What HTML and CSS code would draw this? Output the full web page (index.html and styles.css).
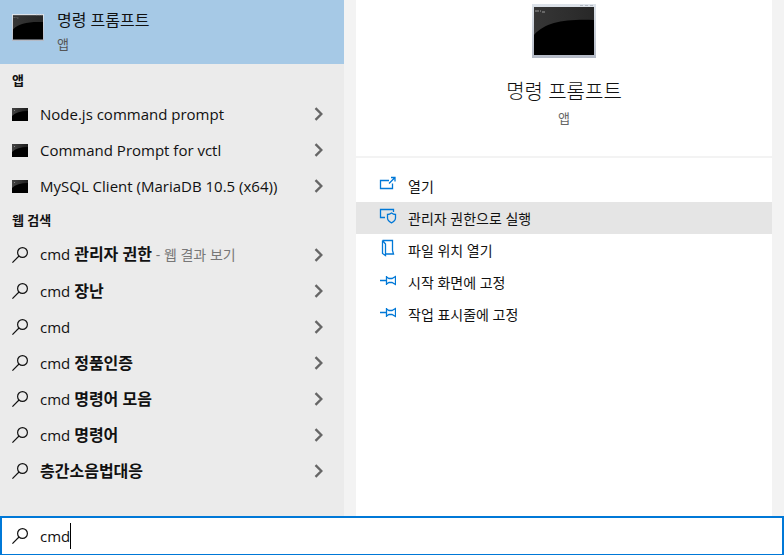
FILE: index.html
```
<!DOCTYPE html>
<html lang="ko">
<head>
    <meta charset="UTF-8">
    <meta name="viewport" content="width=device-width, initial-scale=1.0">
    <title>검색</title>
    <link rel="stylesheet" href="styles.css">
</head>
<body>
    <!-- 공용 아이콘 -->
    <svg class="sprite" aria-hidden="true">
        <defs>
            <linearGradient id="shine" x1="0" y1="0" x2="1" y2="0">
                <stop offset="0" stop-color="#363636"/>
                <stop offset="1" stop-color="#282828"/>
            </linearGradient>
            <linearGradient id="shine-small" x1="0" y1="0" x2="1" y2="0">
                <stop offset="0" stop-color="#444"/>
                <stop offset="1" stop-color="#1c1c1c"/>
            </linearGradient>
            <linearGradient id="frame" x1="0" y1="0" x2="0" y2="1">
                <stop offset="0" stop-color="#dde3ea"/>
                <stop offset="1" stop-color="#b4bac6"/>
            </linearGradient>
        </defs>
        <symbol id="console" viewBox="0 0 64 54">
            <path d="M0 0h64v54H0z" fill="url(#frame)"/>
            <path d="M2 3h60v48H2z" fill="#000"/>
            <path d="M2 3h60v13C32 15 14 18 2 31z" fill="url(#shine)"/>
            <path d="M3 7h2M6 6v2M8 7h1M10 8h3" stroke="#999" fill="none"/>
            <path d="M48 1.500h3M53 1.500h3M58 1.500h3" stroke="#b4bac4" fill="none"/>
        </symbol>
        <symbol id="console-small" viewBox="0 0 16 13">
            <path d="M0 0h16v13H0z" fill="#000"/>
            <path d="M0 0h16v3Q5 3 0 8z" fill="url(#shine-small)"/>
            <path d="M2 2.500h1" stroke="#888"/>
        </symbol>
        <symbol id="search" viewBox="0 0 16 16">
            <circle cx="10.500" cy="5.500" r="4.900" fill="none" stroke="currentColor" stroke-width="1.2"/>
            <path d="M7 9L.4 15.600" stroke="currentColor" stroke-width="1.2"/>
        </symbol>
        <symbol id="chevron" viewBox="0 0 8 12">
            <path d="M1 1l5 5-5 5" fill="none" stroke="#666" stroke-width="2"/>
        </symbol>
        <symbol id="pin" viewBox="0 0 16 16">
            <path d="M0 8.500h6M6.500 4v9M6.500 5l2.500 1.500h3l3.500-2v8l-3.500-2H9L6.500 12" fill="none" stroke="currentColor" stroke-width="1.3"/>
        </symbol>
    </svg>

    <main class="search-window">
        <section class="results">
            <button class="best-match" type="button">
                <svg class="best-icon"><use href="#console"/></svg>
                <span>
                    <span class="best-name">명령 프롬프트</span>
                    <span class="best-type">앱</span>
                </span>
            </button>

            <h2>앱</h2>
            <ul>
                <li><button class="result" type="button"><svg class="row-icon app"><use href="#console-small"/></svg><span>Node.js command prompt</span><svg class="chevron"><use href="#chevron"/></svg></button></li>
                <li><button class="result" type="button"><svg class="row-icon app"><use href="#console-small"/></svg><span>Command Prompt for vctl</span><svg class="chevron"><use href="#chevron"/></svg></button></li>
                <li><button class="result" type="button"><svg class="row-icon app"><use href="#console-small"/></svg><span>MySQL Client (MariaDB 10.5 (x64))</span><svg class="chevron"><use href="#chevron"/></svg></button></li>
            </ul>

            <h2>웹 검색</h2>
            <ul>
                <li><button class="result with-note" type="button"><svg class="row-icon"><use href="#search"/></svg><span>cmd <b>관리자 권한</b> <small>- 웹 결과 보기</small></span><svg class="chevron"><use href="#chevron"/></svg></button></li>
                <li><button class="result" type="button"><svg class="row-icon"><use href="#search"/></svg><span>cmd <b>장난</b></span><svg class="chevron"><use href="#chevron"/></svg></button></li>
                <li><button class="result" type="button"><svg class="row-icon"><use href="#search"/></svg><span>cmd</span><svg class="chevron"><use href="#chevron"/></svg></button></li>
                <li><button class="result" type="button"><svg class="row-icon"><use href="#search"/></svg><span>cmd <b>정품인증</b></span><svg class="chevron"><use href="#chevron"/></svg></button></li>
                <li><button class="result" type="button"><svg class="row-icon"><use href="#search"/></svg><span>cmd <b>명령어 모음</b></span><svg class="chevron"><use href="#chevron"/></svg></button></li>
                <li><button class="result" type="button"><svg class="row-icon"><use href="#search"/></svg><span>cmd <b>명령어</b></span><svg class="chevron"><use href="#chevron"/></svg></button></li>
                <li><button class="result" type="button"><svg class="row-icon"><use href="#search"/></svg><span><b>층간소음법대응</b></span><svg class="chevron"><use href="#chevron"/></svg></button></li>
            </ul>
        </section>

        <section class="detail">
            <div class="detail-head">
                <svg class="detail-icon"><use href="#console"/></svg>
                <h1>명령 프롬프트</h1>
                <p>앱</p>
            </div>
            <div class="actions">
                <button class="action" type="button">
                    <svg viewBox="0 0 16 16"><path d="M9 4.500H.5v8h12V7.500M9 7.500l5.500-5.500M11 1.500h4v4" fill="none" stroke="currentColor" stroke-width="1.3"/></svg>
                    <span>열기</span>
                </button>
                <button class="action selected" type="button">
                    <svg viewBox="0 0 16 16"><path d="M5 9.500H.5v-8h13V4M11.500 5q2 1.500 4 1.500V10q0 3-4 4.800Q7.500 13 7.500 10V6.500q2 0 4-1.500z" fill="none" stroke="currentColor" stroke-width="1.3"/></svg>
                    <span>관리자 권한으로 실행</span>
                </button>
                <button class="action" type="button">
                    <svg viewBox="0 0 16 16"><path d="M2.500.5h10v10l1 3.500H6M2.500.5v13l3 2V4l-3-3.500" fill="none" stroke="currentColor" stroke-width="1.3"/></svg>
                    <span>파일 위치 열기</span>
                </button>
                <button class="action" type="button">
                    <svg><use href="#pin"/></svg>
                    <span>시작 화면에 고정</span>
                </button>
                <button class="action" type="button">
                    <svg><use href="#pin"/></svg>
                    <span>작업 표시줄에 고정</span>
                </button>
            </div>
        </section>
    </main>

    <label class="search-bar">
        <svg class="row-icon"><use href="#search"/></svg>
        <input type="text" value="cmd" aria-label="검색어">
        <span class="caret"></span>
    </label>
</body>
</html>
```

FILE: styles.css
```
* {
    box-sizing: border-box;
}
body {
    font-family: "Open Sans", "Noto Sans CJK KR", sans-serif;
    font-size: 15px;
    color: #111;
    background: #f3f3f3;
    margin: 0;
    min-height: 100vh;
    display: flex;
    flex-direction: column;
}
h1, h2, p, ul {
    margin: 0;
    padding: 0;
}
ul {
    list-style: none;
}
button {
    font: inherit;
    color: inherit;
    text-align: left;
    border: none;
    background: none;
    padding: 0;
    width: 100%;
    cursor: pointer;
}
svg {
    flex: none;
}
.sprite {
    position: absolute;
    width: 0;
    height: 0;
}
.search-window {
    flex: 1;
    display: grid;
    grid-template-columns: 43fr 52fr;
    column-gap: 12px;
    padding-right: 12px;
}

/* 왼쪽 검색 결과 */
.results {
    background: #ebebeb;
}
.best-match {
    display: flex;
    gap: 13px;
    height: 64px;
    padding: 8px 12px;
    background: #a6c9e6;
}
.best-icon {
    width: 32px;
    height: 27px;
    margin-top: 6px;
}
.best-name,
.best-type {
    display: block;
    line-height: 24px;
}
.best-name {
    font-size: 16px;
}
.best-type {
    font-size: 13px;
    color: #555;
}
h2 {
    font-size: 13px;
    line-height: 32px;
    padding-left: 12px;
}
.result {
    display: flex;
    align-items: center;
    gap: 12px;
    height: 36px;
    padding: 0 20px 0 12px;
}
.result.with-note {
    height: 37px;
}
.result span {
    flex: 1;
    line-height: 24px;
    white-space: nowrap;
}
.result b {
    font-size: 16px;
}
.result small {
    font-size: 14px;
    color: #777;
}
.row-icon {
    width: 16px;
    height: 16px;
}
.row-icon.app {
    height: 13px;
}
.chevron {
    width: 10px;
    height: 14px;
}

/* 오른쪽 상세 정보 */
.detail {
    background: #fff;
}
.detail-head {
    display: flex;
    flex-direction: column;
    align-items: center;
    height: 158px;
    padding-top: 4px;
    border-bottom: 2px solid #f3f3f3;
}
.detail-icon {
    width: 64px;
    height: 54px;
}
h1 {
    font-size: 20px;
    font-weight: 300;
    line-height: 28px;
    margin-top: 20px;
}
.detail-head p {
    font-size: 13px;
    line-height: 24px;
    color: #666;
}
.actions {
    padding-top: 12px;
}
.action {
    display: flex;
    align-items: center;
    gap: 12px;
    height: 32px;
    padding-left: 24px;
    font-size: 14px;
}
.action svg {
    width: 16px;
    height: 16px;
    margin-bottom: 4px;
    color: #0078d7;
    overflow: visible;
}
.action.selected {
    background: #e5e5e5;
}

/* 검색창 */
.search-bar {
    display: flex;
    align-items: center;
    height: 39px;
    padding-left: 10px;
    background: #fff;
    border: 2px solid #0078d7;
    border-bottom-width: 1px;
}
.search-bar input {
    font: inherit;
    color: inherit;
    field-sizing: content;
    margin-left: 12px;
    padding: 0;
    border: none;
    outline: none;
}
.caret {
    width: 1px;
    height: 26px;
    background: #000;
}
```
